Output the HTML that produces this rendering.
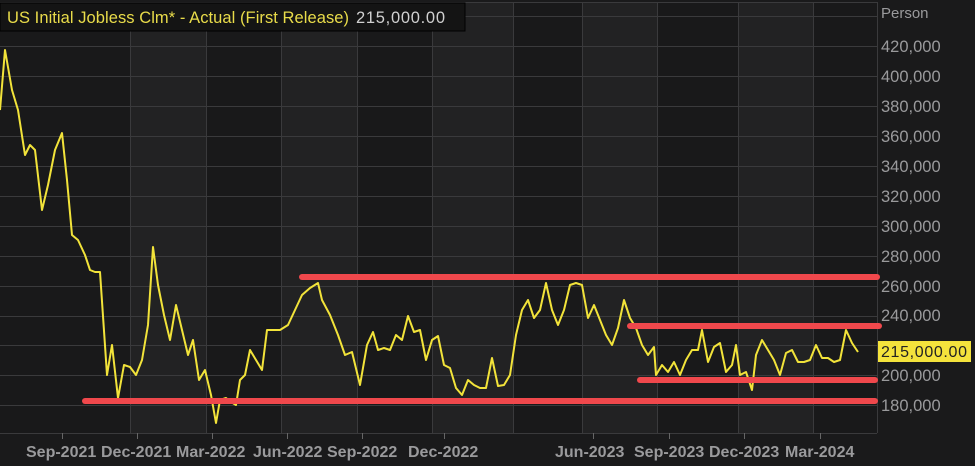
<!DOCTYPE html>
<html><head><style>
body{margin:0;background:#1a1a1b;width:975px;height:466px;overflow:hidden;font-family:"Liberation Sans",sans-serif}
</style></head><body>
<svg width="975" height="466" xmlns="http://www.w3.org/2000/svg" style="position:absolute;left:0;top:0">
<rect x="0" y="0" width="975" height="466" fill="#1a1a1b"/>
<rect x="0" y="2" width="877" height="431" fill="#19191a"/>
<g fill="#222223">
<rect x="130" y="2" width="76" height="431"/>
<rect x="281" y="2" width="76" height="431"/>
<rect x="432" y="2" width="81" height="431"/>
<rect x="582" y="2" width="75" height="431"/>
<rect x="738" y="2" width="75" height="431"/>
</g>
<g stroke="#3a3a3c" stroke-width="1">
<line x1="0" y1="2.5" x2="877" y2="2.5"/>
<line x1="0" y1="16.5" x2="877" y2="16.5"/>
<line x1="0" y1="46.5" x2="877" y2="46.5"/>
<line x1="0" y1="76.5" x2="877" y2="76.5"/>
<line x1="0" y1="106.5" x2="877" y2="106.5"/>
<line x1="0" y1="136.5" x2="877" y2="136.5"/>
<line x1="0" y1="166.5" x2="877" y2="166.5"/>
<line x1="0" y1="196.5" x2="877" y2="196.5"/>
<line x1="0" y1="226.5" x2="877" y2="226.5"/>
<line x1="0" y1="256.5" x2="877" y2="256.5"/>
<line x1="0" y1="286.5" x2="877" y2="286.5"/>
<line x1="0" y1="316.5" x2="877" y2="316.5"/>
<line x1="0" y1="345.5" x2="877" y2="345.5"/>
<line x1="0" y1="375.5" x2="877" y2="375.5"/>
<line x1="0" y1="405.5" x2="877" y2="405.5"/>
<line x1="130.5" y1="2" x2="130.5" y2="433"/>
<line x1="206.5" y1="2" x2="206.5" y2="433"/>
<line x1="281.5" y1="2" x2="281.5" y2="433"/>
<line x1="357.5" y1="2" x2="357.5" y2="433"/>
<line x1="432.5" y1="2" x2="432.5" y2="433"/>
<line x1="513.5" y1="2" x2="513.5" y2="433"/>
<line x1="582.5" y1="2" x2="582.5" y2="433"/>
<line x1="657.5" y1="2" x2="657.5" y2="433"/>
<line x1="738.5" y1="2" x2="738.5" y2="433"/>
<line x1="813.5" y1="2" x2="813.5" y2="433"/>
<line x1="877.5" y1="2" x2="877.5" y2="433"/>
<line x1="0" y1="433.5" x2="877" y2="433.5"/>
</g>
<g stroke="#666" stroke-width="1">
<line x1="62.5" y1="433" x2="62.5" y2="439"/><line x1="137.5" y1="433" x2="137.5" y2="439"/>
<line x1="212.5" y1="433" x2="212.5" y2="439"/><line x1="287.5" y1="433" x2="287.5" y2="439"/>
<line x1="362.5" y1="433" x2="362.5" y2="439"/><line x1="444.5" y1="433" x2="444.5" y2="439"/>
<line x1="593.5" y1="433" x2="593.5" y2="439"/><line x1="669.5" y1="433" x2="669.5" y2="439"/>
<line x1="744.5" y1="433" x2="744.5" y2="439"/><line x1="820.5" y1="433" x2="820.5" y2="439"/>
</g>
<polyline fill="none" stroke="#f2e33a" stroke-width="2" stroke-linejoin="round" points="0,110 5,50 12,90 18,110 25,155 30,145 35,150 42,210 48,185 55,150 62,133 67,180 72,235 78,240 85,255 90,270 95,272 100,272 107,375 112,345 118,398 124,365 130,367 136,375 142,360 148,325 153,247 158,285 164,315 170,340 176,305 182,330 188,355 193,340 199,380 205,370 211,395 216,423 220,400 226,398 231,402 236,405 240,380 245,375 250,350 256,360 262,370 267,330 274,330 280,330 288,325 295,310 302,295 310,288 318,283 322,300 330,315 338,335 345,355 352,352 360,385 367,345 373,332 378,350 384,348 390,350 396,335 402,340 408,316 414,332 420,330 426,360 432,340 438,336 444,365 450,368 456,388 462,395 468,380 474,385 480,388 486,388 492,358 498,386 504,385 510,375 516,335 522,310 528,300 534,318 540,310 546,283 552,310 558,325 564,310 570,285 576,283 582,285 588,318 594,305 600,320 606,335 612,345 618,328 624,300 630,318 636,328 642,345 648,355 654,347 656,375 662,365 668,372 674,362 680,375 686,360 692,350 698,350 702,330 708,362 714,347 720,343 726,372 732,365 736,345 740,375 746,372 752,390 756,355 762,340 768,350 774,360 780,375 786,353 792,350 798,362 804,362 810,360 816,345 822,358 828,358 834,362 840,360 846,330 852,343 858,352"/>
<g stroke="#f0484c" stroke-width="6" stroke-linecap="round">
<line x1="302" y1="277" x2="877" y2="277"/>
<line x1="630" y1="326" x2="879" y2="326"/>
<line x1="640" y1="380" x2="875" y2="380"/>
<line x1="85" y1="401" x2="875" y2="401"/>
</g>
<g fill="#9a9a9c" font-size="16.5">
<text x="881" y="18" font-size="15">Person</text>
<text x="881" y="52">420,000</text>
<text x="881" y="82">400,000</text>
<text x="881" y="112">380,000</text>
<text x="881" y="142">360,000</text>
<text x="881" y="172">340,000</text>
<text x="881" y="202">320,000</text>
<text x="881" y="232">300,000</text>
<text x="881" y="262">280,000</text>
<text x="881" y="292">260,000</text>
<text x="881" y="321">240,000</text>
<text x="881" y="381">200,000</text>
<text x="881" y="411">180,000</text>
</g>
<rect x="878" y="341" width="93" height="21" fill="#f4e33c"/>
<text x="881" y="357" font-size="16" fill="#222" textLength="86">215,000.00</text>
<g fill="#9a9a9c" font-size="16" font-weight="bold">
<text x="26" y="457">Sep-2021</text>
<text x="101" y="457">Dec-2021</text>
<text x="176" y="457">Mar-2022</text>
<text x="253" y="457">Jun-2022</text>
<text x="327" y="457">Sep-2022</text>
<text x="408" y="457">Dec-2022</text>
<text x="555" y="457">Jun-2023</text>
<text x="634" y="457">Sep-2023</text>
<text x="709" y="457">Dec-2023</text>
<text x="785" y="457">Mar-2024</text>
</g>
<rect x="0" y="3" width="465" height="28" fill="#141414" stroke="#000" stroke-width="1"/>
<text x="7" y="23" font-size="16.5" fill="#e9dc4a" textLength="342">US Initial Jobless Clm* - Actual (First Release)</text>
<text x="356" y="23" font-size="16.5" fill="#d0d0d0" textLength="89">215,000.00</text>
</svg>
</body></html>
